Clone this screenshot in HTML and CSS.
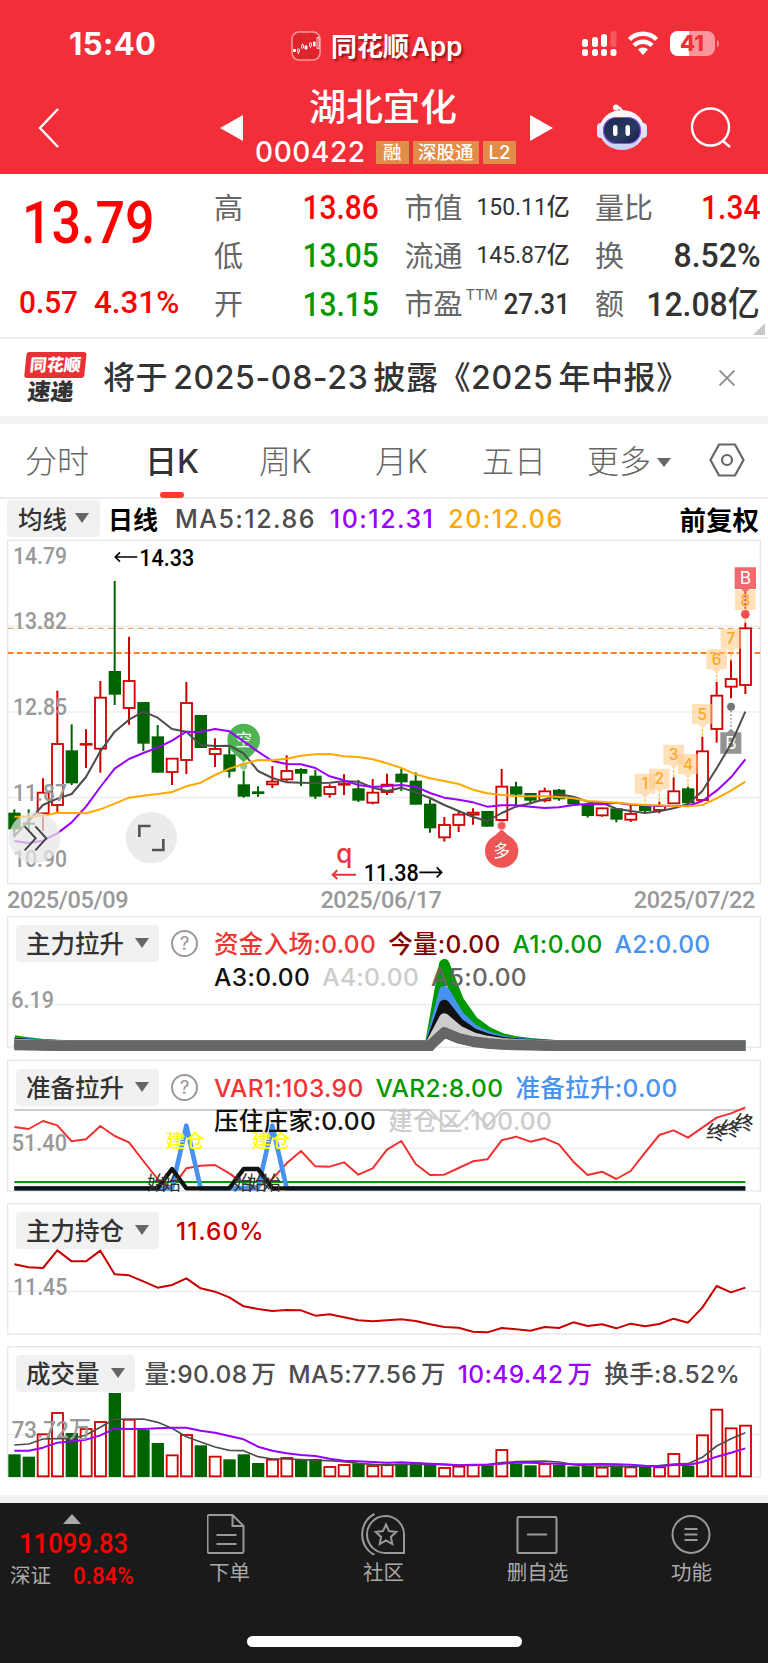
FILE: index.html
```html
<!DOCTYPE html>
<html lang="zh-Hans">
<head>
  <meta charset="UTF-8" />
  <meta name="viewport" content="width=device-width, initial-scale=1.0"/>
  <title>湖北宜化 000422</title>
  <link rel="stylesheet" href="styles.css">
</head>
<body>
  <!-- 顶部 -->
  <header class="top">
    <div class="status">
      <span class="clock">15:40</span>
      <div class="app">
        <svg class="app-icon" viewBox="0 0 30 30" fill="none" stroke="#fff">
          <rect x="1" y="1" width="28" height="28" rx="7" fill="#e0252c" stroke="#ff9a9a" stroke-width="1.6"/>
          <path d="M1 20h28M9 1v28M20 1v28M1 10h28" stroke="#c92a2e" stroke-width=".5"/>
          <path d="M2.500 18.500h2v2h-2zM14 15h2v3h-2zM22.500 11h1.500v4h-1.500z" fill="#fff"/>
          <path d="M6.500 18h2v3h-2zM10.500 14h2v3h-2zM18.500 12h2v3h-2zM26 6.500h2v11h-2zM7.500 21v2M11.500 12.500V14M19.500 15v2" stroke-width=".8"/>
        </svg>
        <span>同花顺<b>App</b></span>
      </div>
      <svg class="signal" viewBox="0 0 138 28" fill="#fff">
        <g>
          <rect x="1" y="8" width="6" height="8" rx="2.500"/><rect x="11" y="6" width="6" height="10" rx="2.500"/>
          <rect x="20" y="3" width="6" height="13" rx="2.500"/><rect x="29.500" y="0" width="6" height="16" rx="2.500" opacity=".2"/>
          <rect x="1" y="18" width="6" height="7" rx="2.500"/><rect x="11" y="18" width="6" height="7" rx="2.500"/>
          <rect x="20" y="18" width="6" height="7" rx="2.500"/><rect x="29.500" y="18" width="6" height="7" rx="2.500"/>
        </g>
        <g fill="none" stroke="#fff" stroke-width="4.500">
          <path d="M48.500 8.500a19 19 0 0 1 27 0"/>
          <path d="M53 14.500a12.500 12.500 0 0 1 18 0"/>
        </g>
        <path d="M62 24l-5-5.500a7 7 0 0 1 10 0z"/>
        <rect x="89" y="0" width="45" height="25" rx="8" opacity=".5"/>
        <path d="M97 0h11v25H97a8 8 0 0 1-8-8V8a8 8 0 0 1 8-8z"/>
        <path d="M136 9v7q2-1 2-3.500T136 9z" opacity=".5"/>
        <text x="111" y="20" class="battery-num">41</text>
      </svg>
    </div>
    <div class="nav">
      <svg class="back" viewBox="0 0 22 40"><path d="M20 1L2 20l18 19" fill="none" stroke="#fff" stroke-width="2.400"/></svg>
      <svg class="arrow prev" viewBox="0 0 23 26"><path d="M23 0v26L0 13z" fill="#fff"/></svg>
      <div class="stock">
        <h1>湖北宜化</h1>
        <div class="code"><b>000422</b><i>融</i><i>深股通</i><i>L2</i></div>
      </div>
      <svg class="arrow" viewBox="0 0 23 26"><path d="M0 0v26l23-13z" fill="#fff"/></svg>
      <svg class="robot" viewBox="0 0 50 46">
        <defs>
          <linearGradient id="shell" x1="0" y1="0" x2="0" y2="1"><stop offset="0" stop-color="#fff"/><stop offset="1" stop-color="#c8cef6"/></linearGradient>
          <linearGradient id="face" x1="0" y1="0" x2="1" y2="1"><stop offset="0" stop-color="#18254c"/><stop offset=".6" stop-color="#2b3a62"/><stop offset="1" stop-color="#101b3e"/></linearGradient>
        </defs>
        <path d="M25 9q0-6-6-5.500" fill="none" stroke="#eceefe" stroke-width="2.500"/>
        <circle cx="19" cy="3.500" r="3" fill="#fff"/>
        <rect x="0" y="19" width="8" height="15" rx="4" fill="#dfe2fa"/><rect x="42" y="19" width="8" height="15" rx="4" fill="#dfe2fa"/>
        <ellipse cx="25" cy="26" rx="22.500" ry="20" fill="url(#shell)"/>
        <rect x="6.500" y="13.500" width="37" height="26" rx="12.500" fill="url(#face)" stroke="#8b54e8" stroke-width="1.200"/>
        <rect x="16" y="21" width="4.500" height="11" rx="2.200" fill="#fff"/><rect x="28.500" y="21" width="4.500" height="11" rx="2.200" fill="#fff"/>
      </svg>
      <svg class="search" viewBox="0 0 42 42" fill="none" stroke="#fff" stroke-width="2.400"><circle cx="20.500" cy="20" r="18.500"/><path d="M33 34l7 6"/></svg>
    </div>
  </header>

  <!-- 报价 -->
  <section class="quote">
    <div class="price">
      <strong class="din">13.79</strong>
      <p><span class="din">0.57</span><span class="din">4.31%</span></p>
    </div>
    <dl>
      <div><dt>高</dt><dd class="din up">13.86</dd></div>
      <div><dt>低</dt><dd class="din down">13.05</dd></div>
      <div><dt>开</dt><dd class="din down">13.15</dd></div>
    </dl>
    <dl>
      <div><dt>市值</dt><dd class="din small">150.11亿</dd></div>
      <div><dt>流通</dt><dd class="din small">145.87亿</dd></div>
      <div><dt>市盈<sup>TTM</sup></dt><dd class="din mid">27.31</dd></div>
    </dl>
    <dl>
      <div><dt>量比</dt><dd class="din up">1.34</dd></div>
      <div><dt>换</dt><dd class="din wide">8.52%</dd></div>
      <div><dt>额</dt><dd class="din wide">12.08亿</dd></div>
    </dl>
    <svg class="corner" viewBox="0 0 12 12"><path d="M12 0v12H0z" fill="#c8c8c8"/></svg>
  </section>

  <!-- 公告 -->
  <section class="notice">
    <div class="express"><span>同花顺</span><em>速递</em></div>
    <p>将于<span>2025-08-23</span>披露《2025<span>年中报》</span></p>
    <svg class="close" viewBox="0 0 16 16"><path d="M.500.500l15 15M15.500.500l-15 15" stroke="#8a8a8a" stroke-width="1.800"/></svg>
  </section>

  <!-- 周期 -->
  <nav class="tabs">
    <a>分时</a><a class="active">日K</a><a>周K</a><a>月K</a><a>五日</a><a class="more">更多</a>
    <svg class="setting" viewBox="0 0 36 34" fill="none" stroke="#666" stroke-width="2.200"><path d="M10 1.500h16L34.500 17 26 32.500H10L1.500 17z"/><circle cx="18" cy="17" r="5"/></svg>
  </nav>

  <div class="ma">
    <span class="pill">均线</span>
    <b>日线</b>
    <span class="c-dark">MA5:12.86</span>
    <span class="c-purple">10:12.31</span>
    <span class="c-yellow">20:12.06</span>
    <b class="right">前复权</b>
  </div>

  <svg class="kline" id="kline" viewBox="0 30 2304 1032"></svg>
  <div class="dates"><span>2025/05/09</span><span>2025/06/17</span><span>2025/07/22</span></div>

  <section class="panel">
    <svg id="pull" viewBox="0 18 2304 396"></svg>
    <div class="legend">
      <span class="pill">主力拉升</span><span class="help">?</span>
      <div class="values">
        <p><span class="c-red">资金入场:0.00</span><span class="c-maroon">今量:0.00</span><span class="c-green">A1:0.00</span><span class="c-blue">A2:0.00</span></p>
        <p><span class="c-black">A3:0.00</span><span class="c-light">A4:0.00</span><span class="c-gray">A5:0.00</span></p>
      </div>
    </div>
  </section>

  <section class="panel">
    <svg id="ready" viewBox="0 15 2304 396"></svg>
    <div class="legend">
      <span class="pill">准备拉升</span><span class="help">?</span>
      <div class="values">
        <p><span class="c-red">VAR1:103.90</span><span class="c-green">VAR2:8.00</span><span class="c-blue">准备拉升:0.00</span></p>
        <p><span class="c-black">压住庄家:0.00</span><span class="c-light">建仓区:100.00</span></p>
      </div>
    </div>
  </section>

  <section class="panel">
    <svg id="hold" viewBox="0 24 2304 396"></svg>
    <div class="legend">
      <span class="pill">主力持仓</span>
      <div class="values near"><p><span class="c-crimson">11.60%</span></p></div>
    </div>
  </section>

  <section class="panel">
    <svg id="volume" viewBox="0 18 2304 396"></svg>
    <div class="legend">
      <span class="pill">成交量</span>
      <div class="values vol"><p><span class="c-dark">量:90.08<u>万</u></span><span class="c-dark">MA5:77.56<u>万</u></span><span class="c-purple">10:49.42<u>万</u></span><span class="c-dark">换手:8.52%</span></p></div>
    </div>
  </section>

  <!-- 底部 -->
  <footer class="bottom">
    <div class="index">
      <i class="tri"></i>
      <strong class="din">11099.83</strong>
      <p><span>深证</span><b class="din">0.84%</b></p>
    </div>
    <div class="item">
      <svg viewBox="0 0 44 42"><path d="M2.500 2h23l11 11v25q0 2-2 2h-32q-2 0-2-2V4q0-2 2-2zM25.500 2v11h11M9.500 22h20M9.500 31h20"/></svg>
      <span>下单</span>
    </div>
    <div class="item">
      <svg viewBox="0 0 44 42"><path d="M43 40H25a18.500 18.500 0 1 1 18-18.500zM13.500 1C-3 9-3 34 13.500 42M25 11.500l3 6.600 7.200.9-5.300 4.900 1.400 7.100-6.300-3.500-6.300 3.500 1.400-7.100-5.300-4.900 7.200-.9z"/></svg>
      <span>社区</span>
    </div>
    <div class="item">
      <svg viewBox="0 0 44 42"><rect x="2.500" y="4" width="39" height="36" rx="1"/><path d="M12 21.500h20"/></svg>
      <span>删自选</span>
    </div>
    <div class="item">
      <svg viewBox="0 0 44 42"><circle cx="22" cy="21.500" r="18.500"/><path d="M15.500 16h13M15.500 21.500h13M15.500 27h13"/></svg>
      <span>功能</span>
    </div>
    <i class="home"></i>
  </footer>
  <script src="script.js"></script>
</body>
</html>
```

FILE: styles.css
```css
* { box-sizing: border-box; }
body {
  margin: 0;
  width: 768px;
  background: #fff;
  color: #333;
  font-family: Inter, "Noto Sans CJK SC", sans-serif;
}
h1, p, dl, dd { margin: 0; }
i, em { font-style: normal; }
u { text-decoration: none; }
svg { display: block; flex: none; }
.din {
  display: inline-block;
  font-family: Roboto, "Noto Sans CJK SC", sans-serif;
  font-weight: 500;
  transform: scaleX(.88);
  transform-origin: left;
}

/* top */
.top {
  height: 174px;
  background: #f22f38;
  color: #fff;
}
.status {
  display: flex;
  align-items: center;
  height: 86px;
  padding-left: 69px;
}
.clock {
  width: 222px;
  padding-top: 1px;
  font-size: 31px;
  font-weight: 700;
  letter-spacing: .4px;
}
.app {
  display: flex;
  align-items: center;
  gap: 11px;
  width: 290px;
  padding-top: 5px;
  font-size: 26px;
  font-weight: 600;
  text-shadow: 2px 2px 2px rgba(90, 0, 0, .6);
}
.app span { margin: -3px 0 0 -1px; }
.app b { margin-left: 2px; font-weight: 600; }
.app-icon { width: 30px; height: 30px; }
.signal { width: 138px; height: 28px; margin-top: 3px; }
.battery-num {
  fill: #f22f38;
  font-size: 22px;
  font-weight: 800;
  text-anchor: middle;
}
.nav {
  display: flex;
  height: 84px;
  padding: 0 36px 0 38px;
}
.back { width: 22px; height: 40px; margin-top: 22px; }
.arrow { width: 23px; height: 26px; margin-top: 29px; }
.prev { margin-left: 160px; }
.stock { width: 287px; text-align: center; }
.stock h1 {
  height: 43px;
  margin-left: -7px;
  padding-top: 1px;
  font-size: 37px;
  font-weight: 500;
  line-height: 42px;
}
.code {
  display: flex;
  gap: 4px;
  margin: 8px 0 0 12px;
  line-height: 30px;
}
.code b {
  width: 117px;
  font-size: 28px;
  font-weight: 500;
  letter-spacing: .6px;
  text-align: left;
}
.code i {
  height: 23px;
  margin-top: 4px;
  padding: 0 5.500px;
  background: #e28c49;
  font-size: 18.500px;
  font-weight: 500;
  line-height: 22px;
}
.code i:nth-child(2) { padding: 0 7px; }
.robot { width: 50px; height: 46px; margin: 18px 0 0 44px; }
.search { width: 42px; height: 42px; margin: 21px 0 0 43px; }

/* quote */
.quote {
  position: relative;
  display: flex;
  height: 165px;
  border-bottom: 2px solid #ececec;
}
.price {
  flex: none;
  width: 214px;
  color: #f00;
}
.price strong {
  height: 66px;
  margin: 16px 0 0 22px;
  font-size: 60px;
  font-weight: 500;
  line-height: 66px;
  transform: scaleX(.865);
}
.price p {
  display: flex;
  margin: 28px 0 0 19px;
  font-size: 32px;
  line-height: 36px;
}
.price p span { width: 75px; transform: scaleX(.93); }
.price p span:last-child { transform: scaleX(.98); }
.quote dl {
  flex: none;
  width: 165px;
  margin-right: 25.500px;
  padding-top: 9px;
}
.quote dl:last-of-type { margin-right: 0; }
.quote dl div {
  display: flex;
  justify-content: space-between;
  align-items: center;
  height: 48.300px;
}
dt {
  margin-top: -3px;
  color: #666;
  font-size: 29px;
  white-space: nowrap;
}
dt sup {
  margin-left: 3px;
  font-size: 15px;
  letter-spacing: -.3px;
  line-height: 0;
  vertical-align: 15px;
}
dd { font-size: 34px; line-height: 40px; }
.quote dd { transform-origin: right; }
.quote .wide { transform: scaleX(.94); }
.quote .small {
  margin-left: -20px;
  font-size: 24px;
  font-weight: 450;
  transform: scaleX(.955);
}
.quote .mid {
  margin-left: -20px;
  font-size: 29px;
  font-weight: 500;
  transform: scaleX(.9);
}
.up { color: #f00; }
.down { color: #090; }
.corner { position: absolute; right: 3px; bottom: 2px; width: 12px; height: 12px; }

/* notice */
.notice {
  display: flex;
  align-items: center;
  height: 85px;
  padding-left: 24px;
  border-bottom: 8px solid #f3f3f3;
}
.express { width: 79px; font-weight: 900; line-height: 1; transform: skewX(-6deg); }
.express span {
  display: block;
  width: 60px;
  height: 26px;
  border-radius: 3px;
  background: #e93035;
  color: #fff;
  font-size: 17px;
  line-height: 26px;
  text-align: center;
}
.express em { display: block; padding: 3px 0 0 5px; font-size: 23px; }
.notice p {
  width: 616px;
  margin-top: -5px;
  font-size: 32px;
  font-weight: 500;
  letter-spacing: .6px;
  white-space: nowrap;
}
.notice p > span:first-child { margin: 0 5px; }
.notice p > span:last-child { margin-left: 5px; }
.close { width: 16px; height: 16px; }

/* tabs */
.tabs {
  display: flex;
  align-items: center;
  height: 75px;
  padding-left: 25px;
  border-bottom: 2px solid #ececec;
  color: #666;
  font-size: 32px;
  font-weight: 300;
}
.tabs a {
  position: relative;
  width: 116px;
  margin-top: -4px;
  white-space: nowrap;
}
.tabs a:nth-child(1) { width: 120px; }
.tabs a:nth-child(2) { width: 114px; }
.tabs a:nth-child(4) { width: 107px; }
.tabs a:nth-child(5) { width: 105px; }
.tabs .active { color: #333; font-weight: 500; }
.active::after {
  content: "";
  position: absolute;
  left: 15px;
  bottom: -16px;
  width: 24px;
  height: 6px;
  border-radius: 3px;
  background: #ff3a30;
}
.tabs .more { width: 122px; }
.more::after {
  content: "";
  display: inline-block;
  margin-left: 6px;
  border: 7px solid transparent;
  border-top: 9px solid #666;
  border-bottom: 0;
  vertical-align: 6px;
}
.setting { width: 36px; height: 34px; margin-top: -1px; }

.ma {
  display: flex;
  align-items: center;
  height: 41px;
  padding: 0 9px 2px 7px;
  font-size: 25px;
  font-weight: 550;
  letter-spacing: 1.450px;
  white-space: nowrap;
}
.ma span { margin-right: 14px; }
.ma b {
  width: 67px;
  margin-top: -1px;
  color: #000;
  font-weight: 600;
  letter-spacing: 0;
}
.ma .right { width: auto; margin-left: auto; font-size: 26.500px; }
.pill {
  display: inline-flex;
  align-items: center;
  height: 37px;
  padding: 0 10px 1px;
  border-radius: 4px;
  background: #f1f1f1;
  color: #333;
  font-size: 24.500px;
  font-weight: 500;
  letter-spacing: 0;
}
.pill::after {
  content: "";
  margin-left: 11px;
  border: 7px solid transparent;
  border-top: 10px solid #666;
  border-bottom: 0;
}
.ma .pill { width: 93px; margin-right: 8px; padding-left: 11px; padding-right: 0; }
.ma .pill::after { margin-left: 8px; }

/* charts */
.kline { width: 768px; height: 344px; overflow: visible; }
.dates {
  display: flex;
  justify-content: space-between;
  height: 32px;
  padding: 0 13px 0 7px;
  color: #999;
  font: 500 23.500px/32px Roboto, sans-serif;
  letter-spacing: -.4px;
}
.panel {
  position: relative;
  height: 132px;
  margin-bottom: 11px;
}
.dates + .panel { margin-bottom: 12px; }
.panel svg {
  position: absolute;
  inset: 0;
  width: 768px;
  height: 132px;
  overflow: visible;
}
.legend {
  position: relative;
  display: flex;
  padding: 8.500px 0 0 16px;
  white-space: nowrap;
}
.help {
  width: 27px;
  height: 27px;
  margin: 5px 16px 0 12px;
  border: 2px solid #999;
  border-radius: 50%;
  color: #999;
  font-size: 19px;
  line-height: 23px;
  text-align: center;
}
.values {
  padding-top: 3px;
  font-size: 24.500px;
  font-weight: 550;
  letter-spacing: .35px;
  line-height: 33px;
}
.values p { display: flex; gap: 12px; height: 33px; }
.near { margin-left: 17px; letter-spacing: 1px; }
.vol { margin-left: 10px; }
.values u { margin-left: 4px; }

svg text { font-family: Inter, "Noto Sans CJK SC", sans-serif; }
svg .axis {
  fill: #999;
  font-family: Roboto, "Noto Sans CJK SC", sans-serif;
  font-size: 70px;
  font-weight: 500;
}
svg .mark {
  fill: #000;
  font-family: Roboto, sans-serif;
  font-size: 72px;
  font-weight: 500;
}
.tag {
  fill: #ffa726;
  font-size: 46px;
  font-weight: 500;
  text-anchor: middle;
}

.c-dark { color: #4d4d4d; }
.c-purple { color: #9900ff; }
.c-yellow { color: #ffa900; }
.c-red { color: #f03434; }
.c-maroon { color: #800000; }
.c-green { color: #090; }
.c-blue { color: #4791f0; }
.c-black { color: #111; }
.c-light { color: #ccc; }
.c-gray { color: #666; }
.c-crimson { color: #c00; }

/* bottom */
.bottom {
  position: relative;
  display: flex;
  height: 168px;
  margin-top: 17px;
  border-top: 8px solid #f3f3f3;
  background: #1a1a1a;
  color: #aaa;
}
.index { width: 152px; padding-top: 11px; color: #f00; }
.tri {
  display: block;
  width: 18px;
  margin-left: 63px;
  border: 9px solid transparent;
  border-top: 0;
  border-bottom: 10px solid #aaa;
}
.index strong {
  margin: 1px 0 0 19px;
  font-size: 28.500px;
  font-weight: 500;
  line-height: 38px;
  transform: scaleX(.9);
}
.index p {
  display: flex;
  align-items: center;
  padding-left: 10px;
  line-height: 26px;
}
.index p span { width: 63px; color: #aaa; font-size: 20.500px; }
.index p b { font-size: 24px; font-weight: 500; transform: scaleX(.93); }
.item {
  display: flex;
  flex-direction: column;
  align-items: center;
  width: 154px;
  padding-top: 10px;
  font-size: 20.500px;
  line-height: 36px;
}
.item span { margin-left: 1px; }
.item svg { width: 44px; height: 42px; fill: none; stroke: #999; stroke-width: 2; }
.home {
  position: absolute;
  left: 247px;
  bottom: 16px;
  width: 275px;
  height: 11px;
  border-radius: 6px;
  background: #fff;
}
```

FILE: script.js
```js
// chart units are thirds of a pixel, one bar every 43
const STEP = 43;
const RED = "#d00000";
const GREEN = "#006400";
const x = i => STEP + STEP * i;

// colour, high, low, body top, body bottom
const candles = [
  ["g",838,922,848,898],["g",838,900,878,884],["r",745,902,786,852],["r",482,848,640,827],["g",583,765,661,760],
  ["r",598,714,640,644],["r",453,728,501,658],["g",153,525,423,494],["r",320,584,451,536],["g",516,663,516,641],
  ["g",585,728,619,728],["r",684,765,684,728],["r",456,732,517,692],["g",555,654,555,654],["r",625,711,655,674],
  ["g",650,743,673,725],["g",722,803,763,800],["g",769,800,784,792],["r",708,774,753,765],["r",676,754,721,750],
  ["g",715,768,717,731],["g",720,807,737,800],["r",763,803,769,794],["r",733,795,760,766],["g",750,816,775,812],
  ["r",747,823,786,820],["r",731,795,762,788],["g",715,783,731,757],["g",727,824,752,824],["g",808,908,821,895],
  ["r",861,935,883,924],["r",840,906,852,887],["r",835,884,846,856],["g",843,890,843,890],["r",717,876,768,872],
  ["g",755,825,769,794],["g",789,823,789,812],["r",773,817,782,813],["g",777,812,779,808],["g",803,823,803,823],
  ["g",825,863,825,858],["r",833,860,833,858],["g",835,877,835,869],["r",825,876,850,871],["g",825,848,828,843],
  ["r",815,850,826,842],["r",742,822,782,822],["g",770,822,775,820],["r",620,812,662,812],["r",456,638,495,599],
  ["r",390,505,445,472],["r",278,492,293,467]
];
const ma5 = [918,873,825,806,792,741,664,605,569,545,563,597,605,645,648,647,670,723,744,757,758,759,758,754,755,773,783,773,787,804,825,843,861,873,849,830,820,808,793,800,815,819,836,843,849,844,835,822,783,715,642,545];
const ma10 = [933,939,932,910,877,830,771,716,687,669,653,632,605,606,597,604,634,665,693,702,703,714,739,751,765,771,768,765,770,789,803,809,817,830,826,826,830,834,832,825,822,823,818,824,826,828,828,828,813,782,742,688];
const ma20 = [860,860,857,848,849,850,838,821,803,797,792,786,769,758,735,716,702,690,691,686,677,673,672,679,681,688,700,714,733,745,753,762,779,790,795,798,799,799,801,805,813,815,818,822,825,826,828,829,825,805,782,755];

const line = (ys, color, w) =>
  `<polyline points="${ys.map((y, i) => x(i) + "," + y).join(" ")}" fill="none" stroke="${color}" stroke-width="${w}" stroke-linejoin="round"/>`;
const path = (d, color, w, extra = "") => `<path d="${d}" fill="none" stroke="${color}" stroke-width="${w}" ${extra}/>`;
const text = (px, py, s, attrs = "") => `<text x="${px}" y="${py}" ${attrs}>${s}</text>`;
const axis = (px, py, s, w) => text(px, py, s, `class="axis" textLength="${w}" lengthAdjust="spacingAndGlyphs"`);
const frame = (top, bottom, grid) =>
  `<rect x="23" y="${top}" width="2258" height="${bottom - top}" fill="none" stroke="#e8e8e8" stroke-width="4"/>` +
  grid.map(y => path(`M23 ${y}H2281`, "#efefef", 5)).join("");

function box(i, top, bottom, color) {
  const h = Math.max(bottom - top, 6);
  return color === "g"
    ? `<rect x="${x(i) - 18}" y="${top}" width="37" height="${h}" fill="${GREEN}"/>`
    : `<rect x="${x(i) - 16}" y="${top + 2}" width="33" height="${Math.max(h - 4, 2)}" fill="#fff" stroke="${RED}" stroke-width="5.500"/>`;
}

function drawKline() {
  let s = frame(31, 1061, [288, 546, 803]);
  s += path("M23 295H2281", "#dcae78", 4, 'stroke-dasharray="18 12"');
  s += path("M23 369H2281", "#ff7f27", 6, 'stroke-dasharray="18 9"');
  candles.forEach(([c, hi, lo, top, bottom], i) => {
    s += path(`M${x(i)} ${hi}V${lo}`, c === "g" ? GREEN : RED, 6) + box(i, top, bottom, c);
  });

  // 空 / 多
  s += `<path d="M700 668L731 697 762 668z" fill="#4caf50"/><circle cx="731" cy="630" r="49" fill="#4fb454"/><circle cx="731" cy="708" r="11" fill="#8fd08f"/>`;
  s += text(731, 648, "空", 'fill="#fff" font-size="50" text-anchor="middle"');
  s += `<path d="M1480 922l25-24 25 24z" fill="#ee5555"/><circle cx="1505" cy="963" r="50" fill="#ee5555"/><circle cx="1505" cy="887" r="12" fill="#ee5555" stroke="#f9b0b0" stroke-width="4"/>`;
  s += text(1505, 982, "多", 'fill="#fff" font-size="50" text-anchor="middle"');
  s += `<path d="M2161 607h20l12-11 12 11h19v64h-63z" fill="#777" opacity=".8"/><circle cx="2193" cy="530" r="12" fill="#777"/>`;
  s += path("M2193 542V598", "#888", 4, 'stroke-dasharray="5 6"') + text(2193, 658, "B", 'fill="#fff" font-size="52" text-anchor="middle"');

  s += line(ma5, "#4d4d4d", 6) + line(ma10, "#9900ff", 6) + line(ma20, "#ffa900", 6);

  // 九转
  [731, 716, 644, 672, 522, 358, 296, 180].forEach((top, n) => {
    const cx = x(44 + n);
    s += `<path d="M${cx - 27} ${top}h54q4 0 4 4v52q0 4-4 4h-14l-13 14-13-14h-14q-4 0-4-4v-52q0-4 4-4z" fill="#ffcc88" opacity=".6"/>`;
    s += path(`M${cx} ${top + 76}v22`, "#ffb74d", 4, 'stroke-dasharray="8 4"') + text(cx, top + 47, n + 1, 'class="tag"');
  });
  s += `<path d="M2204 112h64v65h-20l-12 12-12-12h-20z" fill="#f06a6e"/><circle cx="2236" cy="253" r="13" fill="#ee5050"/>`;
  s += path("M2236 186V240", "#e04040", 5, 'stroke-dasharray="6 5"') + text(2236, 163, "B", 'fill="#fff" font-size="52" text-anchor="middle"');

  [[102, "14.79"], [297, "13.82"], [555, "12.85"], [813, "11.87"], [1010, "10.90"]].forEach(([y, v]) => s += axis(39, y, v, 162));
  s += text(418, 107, "14.33", 'class="mark" textLength="165" lengthAdjust="spacingAndGlyphs"') + path("M412 81H346M360 67l-14 14 14 14", "#000", 5);
  s += text(1091, 1053, "11.38", 'class="mark" textLength="165" lengthAdjust="spacingAndGlyphs"') + path("M1258 1027h67M1310 1012l15 15-15 15", "#000", 5);
  s += text(1009, 998, "q", 'fill="#e83538" font-size="78" font-weight="500"') + path("M1068 1034h-70M1012 1021l-14 13 14 13", "#e83538", 6);

  s += `<circle cx="104" cy="923" r="77" fill="#e6e6e6" opacity=".72"/>` + path("M74 889l33 36-33 36M106 889l33 36-33 36", "#444", 6);
  s += `<circle cx="454" cy="923" r="77" fill="#ebebeb"/>` + path("M418 921V888H452M490 927v33H456", "#555", 8);
  kline.innerHTML = s;
}

function drawPull() {
  let s = frame(20, 412, [284]);
  const decay = [0, .55, .3, .17, .09, .05, .03, .015];
  [[244, "#009900"], [163, "#4791f0"], [122, "#111"], [81, "#ccc"], [40, "#666"]].forEach(([peak, color]) => {
    const ys = candles.map((c, i) => {
      if (i < 4) return 407 - peak * [.062, .037, .018, .008][i];
      if (i < 30) return 407;
      return 407 - peak * (i === 30 ? 1 : decay[i - 30] || 0);
    });
    s += line(ys, color, 32);
  });
  pull.innerHTML = s + axis(34, 294, "6.19", 128);
}

function drawReady() {
  const red = [216,222,198,211,259,253,213,243,262,318,372,398,340,332,330,355,386,396,372,325,288,334,335,322,359,340,284,258,327,360,359,339,319,313,256,245,260,250,268,320,360,350,372,348,293,240,226,248,218,188,175,157];
  const flat = (v, over) => candles.map((c, i) => over[i] || v);
  let s = frame(16, 408, [280]);
  s += line(flat(165, {30: 213, 31: 213, 33: 213}), "#ccc", 6);
  s += line(red, "#f03030", 6);
  s += line(flat(381, {}), "#009900", 6);
  s += line(flat(400, {12: 212, 18: 212}), "#4791f0", 14);
  s += line(flat(400, {11: 342, 16: 342, 17: 342}), "#111", 13);
  [470, 514, 729, 772, 814].forEach(cx => s += text(cx, 405, "始", 'fill="#333" font-size="58" text-anchor="middle"'));
  [556, 814].forEach(cx => s += text(cx, 278, "建仓", 'fill="#ff0" font-size="59" font-weight="500" text-anchor="middle"'));
  [[2145, 252], [2188, 241], [2230, 222]].forEach(([cx, cy]) =>
    s += text(cx, cy, "终", `fill="#333" font-size="56" font-weight="500" text-anchor="middle" transform="rotate(8 ${cx} ${cy})"`));
  ready.innerHTML = s + axis(35, 289, "51.40", 166);
}

function drawHold() {
  const ys = [208,217,219,166,199,199,167,238,241,259,278,270,250,280,290,307,334,342,348,345,346,362,358,367,376,379,376,373,378,388,396,398,410,412,399,403,407,396,399,382,393,388,400,386,394,387,371,383,338,273,292,278];
  hold.innerHTML = frame(26, 417, [289]) + line(ys, "#c80000", 6) + axis(39, 299, "11.45", 163);
}

function drawVolume() {
  const tops = [343,350,281,217,279,265,244,159,237,270,309,344,283,316,348,358,343,369,357,352,358,357,379,373,370,376,372,371,367,371,382,378,373,376,328,371,376,370,374,379,378,381,376,380,380,380,340,377,284,207,263,255];
  const v5 = [315,312,297,296,296,285,262,237,238,237,247,265,290,306,321,331,332,350,357,357,359,361,362,365,370,373,376,373,373,373,374,376,376,374,368,365,364,363,366,374,378,378,379,380,378,377,372,371,352,318,296,278];
  const v10 = [332,332,323,308,304,299,286,266,267,267,265,263,263,272,278,288,298,320,332,340,345,348,356,362,364,366,368,367,369,371,373,376,374,374,371,368,368,370,371,373,373,372,373,374,377,379,375,375,366,350,338,325];
  let s = frame(20, 412, [284]);
  tops.forEach((top, i) => s += box(i, top, 411, candles[i][0]));
  volume.innerHTML = s + line(v5, "#4d4d4d", 5) + line(v10, "#9900ff", 6) + axis(35, 294, "73.72万", 238);
}

drawKline();
drawPull();
drawReady();
drawHold();
drawVolume();
```
